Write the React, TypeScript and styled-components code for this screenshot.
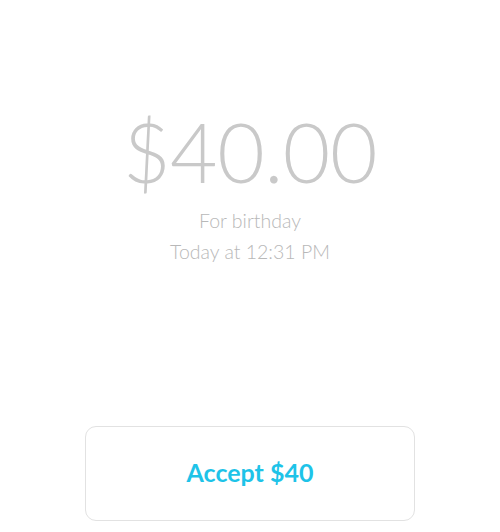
import styled, { createGlobalStyle } from 'styled-components'

const Global = createGlobalStyle`
  html, body {
    margin: 0;
    padding: 0;
    background: #ffffff;
  }
`

const Screen = styled.div`
  width: 500px;
  height: 532px;
  display: flex;
  flex-direction: column;
  align-items: center;
  background: #ffffff;
  font-family: Lato, 'Open Sans', sans-serif;
  overflow: hidden;
`

const Details = styled.div`
  display: flex;
  flex-direction: column;
  align-items: center;
  padding-top: 103px;
  flex: 1;
`

const Amount = styled.div`
  font-size: 82px;
  font-weight: 300;
  line-height: 96px;
  color: #c9c9c9;
  letter-spacing: -0.5px;
`

const Note = styled.div`
  font-size: 19.5px;
  font-weight: 300;
  line-height: 31px;
  color: #b8b8b8;
`

const Notes = styled.div`
  display: flex;
  flex-direction: column;
  align-items: center;
  margin-top: 6px;
`

const Footer = styled.div`
  padding-bottom: 11px;
`

const AcceptButton = styled.button`
  width: 330px;
  height: 95px;
  border: 1px solid #e2e2e2;
  border-radius: 11px;
  background: #ffffff;
  color: #1ec3e8;
  font-family: Lato, 'Open Sans', sans-serif;
  font-size: 25px;
  font-weight: 700;
  padding: 0 0 4px;
  cursor: pointer;
`

export default function App() {
  return (
    <>
      <Global />
      <Screen>
        <Details>
          <Amount>$40.00</Amount>
          <Notes>
            <Note>For birthday</Note>
            <Note>Today at 12:31 PM</Note>
          </Notes>
        </Details>
        <Footer>
          <AcceptButton>Accept $40</AcceptButton>
        </Footer>
      </Screen>
    </>
  )
}
